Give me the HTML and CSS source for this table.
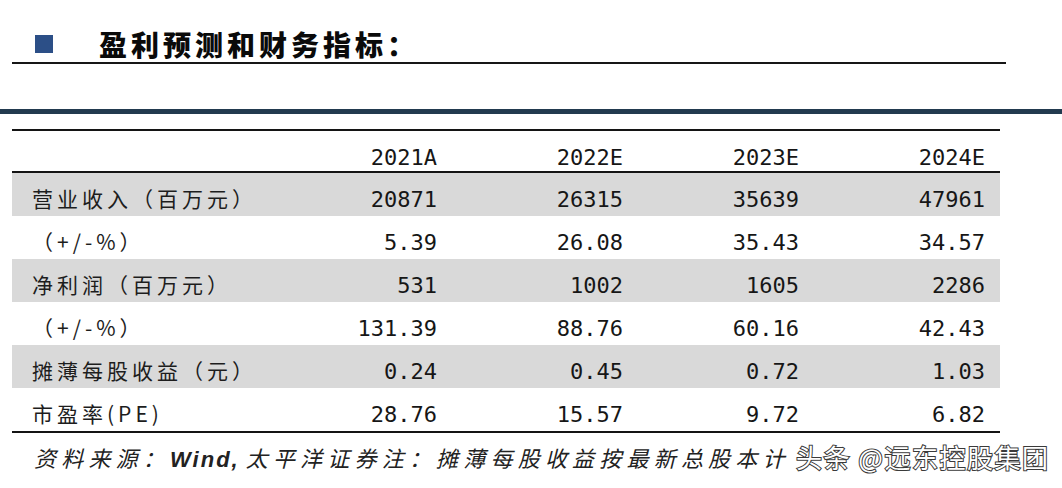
FILE: index.html
```html
<!DOCTYPE html>
<html lang="zh-CN">
<head>
<meta charset="utf-8">
<title>盈利预测和财务指标</title>
<link rel="stylesheet" href="styles.css">
</head>
<body>
<div class="page">
  <header class="heading">
    <span class="marker"></span>
    <h1 class="title">盈利预测和财务指标：</h1>
  </header>
  <div class="title-rule"></div>
  <div class="band"></div>

  <div class="fin">
    <div class="row head">
      <div class="label"></div>
      <div class="num">2021A</div>
      <div class="num">2022E</div>
      <div class="num">2023E</div>
      <div class="num">2024E</div>
    </div>
    <div class="row shade">
      <div class="label">营业收入（百万元）</div>
      <div class="num">20871</div>
      <div class="num">26315</div>
      <div class="num">35639</div>
      <div class="num">47961</div>
    </div>
    <div class="row">
      <div class="label">（+/-%）</div>
      <div class="num">5.39</div>
      <div class="num">26.08</div>
      <div class="num">35.43</div>
      <div class="num">34.57</div>
    </div>
    <div class="row shade">
      <div class="label">净利润（百万元）</div>
      <div class="num">531</div>
      <div class="num">1002</div>
      <div class="num">1605</div>
      <div class="num">2286</div>
    </div>
    <div class="row">
      <div class="label">（+/-%）</div>
      <div class="num">131.39</div>
      <div class="num">88.76</div>
      <div class="num">60.16</div>
      <div class="num">42.43</div>
    </div>
    <div class="row shade">
      <div class="label">摊薄每股收益（元）</div>
      <div class="num">0.24</div>
      <div class="num">0.45</div>
      <div class="num">0.72</div>
      <div class="num">1.03</div>
    </div>
    <div class="row">
      <div class="label">市盈率(PE)</div>
      <div class="num">28.76</div>
      <div class="num">15.57</div>
      <div class="num">9.72</div>
      <div class="num">6.82</div>
    </div>
  </div>

  <p class="source">资料来源：<span class="en">Wind,</span>太平洋证券注：摊薄每股收益按最新总股本计</p>
  <div class="watermark">头条 @远东控股集团</div>
</div>
</body>
</html>
```

FILE: styles.css
```css
* {
  box-sizing: border-box;
  margin: 0;
  padding: 0;
}

html,
body {
  background: #ffffff;
}

body {
  width: 1062px;
  height: 488px;
  overflow: hidden;
  font-family: "Noto Sans CJK SC", "Noto Sans", sans-serif;
  color: #1d1d1d;
}

.page {
  position: relative;
  height: 488px;
  padding-top: 28px;
}

.heading {
  display: flex;
  align-items: center;
  height: 32px;
  padding-left: 35px;
}

.marker {
  flex: none;
  width: 18px;
  height: 18px;
  background: #2c4f87;
}

.title {
  margin-left: 46px;
  font-size: 28px;
  font-weight: 900;
  line-height: 32px;
  letter-spacing: 4px;
  color: #0a0a0a;
}

.title-rule {
  margin: 2px 0 0 12px;
  width: 994px;
  height: 2px;
  background: #161616;
}

.band {
  margin-top: 45px;
  height: 5px;
  background: #223a4f;
}

.fin {
  margin: 15px 0 0 12px;
  width: 988px;
  border-top: 2px solid #141414;
  border-bottom: 2px solid #141414;
}

.row {
  display: grid;
  grid-template-columns: 250px 175px 186px 176px 186px;
  align-items: end;
  height: 43px;
}

.row.head {
  height: 42px;
  border-bottom: 2px solid #141414;
}

.row.shade {
  background: #d9d9d9;
}

.label {
  padding: 0 0 7px 20px;
  font-size: 21px;
  line-height: 22px;
  letter-spacing: 4px;
  white-space: nowrap;
}

.num {
  padding-bottom: 5px;
  text-align: right;
  font-family: "DejaVu Sans Mono", "Liberation Mono", monospace;
  font-size: 22px;
  line-height: 22px;
  color: #161616;
}

.head .num {
  padding-bottom: 2px;
}

.source {
  margin: 13px 0 0 34px;
  font-size: 22px;
  line-height: 23px;
  letter-spacing: 5.2px;
  font-style: italic;
  color: #222222;
  white-space: nowrap;
}

.source .en {
  margin-right: 6px;
  font-family: "Liberation Sans", sans-serif;
  font-weight: 700;
  letter-spacing: 2px;
}

.watermark {
  position: absolute;
  left: 796px;
  top: 442px;
  font-size: 26px;
  line-height: 30px;
  letter-spacing: 1.5px;
  color: #ffffff;
  -webkit-text-stroke: 2px #3a3a3a;
  paint-order: stroke fill;
  white-space: nowrap;
}
```
